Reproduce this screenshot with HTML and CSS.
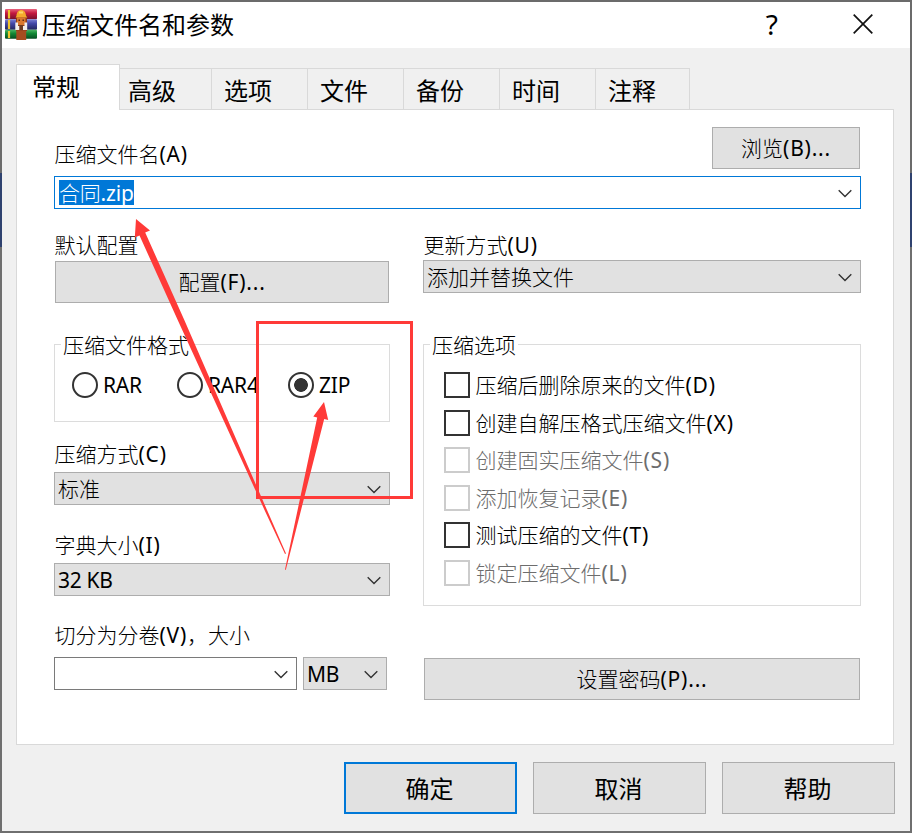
FILE: index.html
```html
<!DOCTYPE html>
<html lang="zh-CN">
<head>
<meta charset="utf-8">
<title>压缩文件名和参数</title>
<link rel="stylesheet" href="styles.css">
</head>
<body>
<svg width="0" height="0" class="defs">
  <symbol id="chev" viewBox="0 0 14 9"><path d="M.7 1.2 7 7.5l6.300-6.300" fill="none" stroke="#333" stroke-width="1.400"/></symbol>
</svg>
<div class="window">
  <header class="titlebar">
    <svg class="logo" viewBox="0 0 32 31">
      <defs>
        <linearGradient id="r" x2="0" y2="1"><stop stop-color="#e8647e"/><stop offset=".4" stop-color="#c4183f"/><stop offset="1" stop-color="#74102c"/></linearGradient>
        <linearGradient id="b" x2="0" y2="1"><stop stop-color="#7b7fd4"/><stop offset=".4" stop-color="#4348a8"/><stop offset="1" stop-color="#23265f"/></linearGradient>
        <linearGradient id="g" x2="0" y2="1"><stop stop-color="#4fb565"/><stop offset=".4" stop-color="#138a36"/><stop offset="1" stop-color="#064c22"/></linearGradient>
      </defs>
      <rect y="0" width="32" height="10.300" rx="1" fill="url(#r)"/>
      <rect y="10.300" width="32" height="10.400" rx="1" fill="url(#b)"/>
      <rect y="20.700" width="32" height="9" rx="1" fill="url(#g)"/>
      <path d="M4 1v8.500M4 11v9M4 22v7" stroke="#efc52e" stroke-width="2.200"/>
      <path d="M11 6h11v16H11z" fill="#8c3a1c"/>
      <path d="M11.500 7c0-8 9.500-8 9.500 0l1.500 1.500h-12z" fill="#f5a92d"/>
      <path d="M14 2.500h4v2h-4z" fill="#fbd86a"/>
      <path d="M12 8.500h8.500V16H12z" fill="#d9782f"/>
      <path d="M13.500 10.500h1.500V12h-1.500zm4 0H19V12h-1.500z" fill="#5c2a14"/>
      <path d="M10.300 13.500h2.700v7.500h-2.700zm9.200 0h2.700v7.500h-2.700zM13 17h1.500v4H13zm5 0h1.500v4H18z" fill="#f2efec"/>
      <path d="M14.500 16h3.500v5h-3.500z" fill="#6b3b22"/>
      <path d="M11.300 21.500h9.900V31h-9.900z" fill="#a64c20"/>
    </svg>
    <h1>压缩文件名和参数</h1>
    <span class="help">?</span>
    <svg class="close" viewBox="0 0 20 20"><path d="M.7.7 19.300 19.300M19.300.7.7 19.300" stroke="#111" stroke-width="1.700"/></svg>
  </header>
  <nav class="tabs">
    <div class="tab active">常规</div><div class="tab">高级</div><div class="tab">选项</div><div class="tab">文件</div><div class="tab">备份</div><div class="tab">时间</div><div class="tab last">注释</div>
  </nav>
  <main class="panel">
    <div class="name-row">
      <label>压缩文件名<span class="lat">(A)</span></label>
      <button class="btn browse">浏览<span class="lat">(B)...</span></button>
    </div>
    <div class="combo focus"><span class="selected">合同<span class="zip">.zip</span></span><svg><use href="#chev"/></svg></div>
    <div class="columns">
      <section class="left">
        <label>默认配置</label>
        <button class="btn profile">配置<span class="lat">(F)...</span></button>
        <fieldset class="group format">
          <legend>压缩文件格式</legend>
          <div class="radio rar"><i></i>RAR</div>
          <div class="radio rar4"><i></i>RAR4</div>
          <div class="radio checked"><i></i>ZIP</div>
        </fieldset>
        <label class="l-method">压缩方式<span class="lat">(C)</span></label>
        <div class="combo">标准<svg><use href="#chev"/></svg></div>
        <label class="l-next">字典大小<span class="lat">(I)</span></label>
        <div class="combo"><span class="lat2">32 KB</span><svg><use href="#chev"/></svg></div>
        <label class="l-next">切分为分卷<span class="lat">(V)</span>，大小</label>
        <div class="volume">
          <div class="combo edit"><svg><use href="#chev"/></svg></div>
          <div class="combo unit"><span class="lat2">MB</span><svg><use href="#chev"/></svg></div>
        </div>
      </section>
      <section class="right">
        <label>更新方式<span class="lat">(U)</span></label>
        <div class="combo">添加并替换文件<svg><use href="#chev"/></svg></div>
        <fieldset class="group options">
          <legend>压缩选项</legend>
          <div class="check"><i></i>压缩后删除原来的文件<span class="lat">(D)</span></div>
          <div class="check"><i></i>创建自解压格式压缩文件<span class="lat">(X)</span></div>
          <div class="check off"><i></i>创建固实压缩文件<span class="lat">(S)</span></div>
          <div class="check off"><i></i>添加恢复记录<span class="lat">(E)</span></div>
          <div class="check"><i></i>测试压缩的文件<span class="lat">(T)</span></div>
          <div class="check off"><i></i>锁定压缩文件<span class="lat">(L)</span></div>
        </fieldset>
        <button class="btn password">设置密码<span class="lat">(P)...</span></button>
      </section>
    </div>
  </main>
  <footer class="actions">
    <button class="btn primary">确定</button>
    <button class="btn">取消</button>
    <button class="btn">帮助</button>
  </footer>
</div>
<svg class="marks" viewBox="0 0 912 833">
  <rect x="257.500" y="322.500" width="154" height="175" fill="none" stroke="#ff3a38" stroke-width="3"/>
  <path d="M136 219 150 230.500 145.200 232.500 184.300 320 267 510 286 553.500 285 554 264.500 510 177.700 320 139.500 235.500 134.800 237.500Z" fill="#ff3a38"/>
  <path d="M324 402 328.200 420 324.200 419 285.800 570 285 569.500 317.200 417.500 313.300 416.500Z" fill="#ff3a38"/>
</svg>
</body>
</html>
```
FILE: styles.css
```css
* { box-sizing: border-box; }
body {
  margin: 0;
  width: 912px;
  height: 833px;
  padding: 2px;
  overflow: hidden;
  position: relative;
  background: linear-gradient(#6b6b6b 0 173px, #2f426f 173px 247px, #6f6f6f 247px);
  font: 300 21px/28px "Noto Sans", "Noto Sans CJK SC", sans-serif;
  color: #000;
}
.defs { position: absolute; }
.window {
  width: 908px;
  height: 829px;
  background: #f0f0f0;
  display: flex;
  flex-direction: column;
}
.titlebar {
  height: 46px;
  flex: none;
  background: #fff;
  display: flex;
  align-items: center;
  padding: 0 37px 2px 3px;
}
.logo { width: 32px; height: 31px; }
h1 {
  margin: 0 0 0 5px;
  flex: 1;
  font: 400 24px/34px "Noto Sans CJK SC", sans-serif;
}
.help { font-size: 28px; font-weight: 400; margin-right: 75px; }
.close { width: 20px; height: 20px; }
.tabs {
  display: flex;
  align-items: flex-end;
  height: 62px;
  flex: none;
  padding-left: 14px;
  font: 400 24px/34px "Noto Sans CJK SC", sans-serif;
}
.tab {
  width: 96px;
  height: 42px;
  border: 1px solid #d9d9d9;
  border-left: 0;
  padding: 4px 0 0 12px;
}
.tab.active {
  width: 104px;
  height: 46px;
  border-left: 1px solid #d9d9d9;
  border-bottom: 0;
  background: #fff;
  padding: 4px 0 0 15px;
}
.tab:nth-child(2) { width: 92px; padding-left: 8px; }
.tab.last { width: 94px; }
.tabs::after { content: ""; height: 1px; background: #d9d9d9; flex: 1; margin-right: 16px; }
.panel {
  margin-left: 14px;
  width: 878px;
  height: 635px;
  flex: none;
  background: #fff;
  border: 1px solid #d9d9d9;
  border-top: 0;
  padding: 17px 32px 0 37px;
}
.name-row { display: flex; justify-content: space-between; height: 49px; padding-right: 1px; }
.name-row label { margin-top: 13px; }
label { display: block; height: 28px; padding-left: .5px; white-space: nowrap; }
.lat { font-weight: 400; letter-spacing: .8px; }
.lat2 { font-weight: 400; letter-spacing: -.3px; }
.btn {
  font: inherit;
  color: inherit;
  padding: 0;
  border: 1px solid #adadad;
  background: #e1e1e1;
  display: block;
}
.browse { width: 148px; height: 42px; }
.combo {
  height: 33px;
  border: 1px solid #adadad;
  background: #e1e1e1;
  display: flex;
  align-items: center;
  justify-content: space-between;
  padding: 0 8.500px 0 3px;
}
.combo svg { width: 14px; height: 9px; margin: 1px 0 0 auto; }
.focus { background: #fff; border-color: #0078d7; padding-left: 4px; }
.selected { background: #0078d7; color: #fff; height: 25px; line-height: 26px; margin-bottom: 1px; letter-spacing: -.2px; }
.zip { font-weight: 400; }
.columns { display: flex; justify-content: space-between; margin-top: 22px; }
.left { width: 336px; }
.right { width: 438px; }
.profile { width: 334px; height: 42px; margin: 2px 1px 0; }
.right > .combo { margin-top: 1px; }
.group {
  border: 1px solid #dcdcdc;
  margin: 0;
  padding: 0;
  min-width: 0;
}
legend { padding: 1px 2px 0; margin-left: 6px; height: 28px; }
.format { height: 92px; margin-top: 27px; display: flex; }
.radio { display: flex; align-items: center; gap: 5px; height: 28px; margin-top: 13px; font-weight: 400; letter-spacing: -.2px; }
.radio i { width: 26px; height: 26px; border: 2px solid #333; border-radius: 50%; }
.rar { margin-left: 17px; width: 105px; }
.rar4 { width: 111px; }
.checked i { background: radial-gradient(circle, #333 0 6.500px, #fff 7.200px); }
.l-method { margin-top: 18px; }
.l-method + .combo { margin-top: 4px; }
.l-next { margin-top: 26px; }
.l-next + .combo { margin-top: 4px; }
.l-next + .volume { margin-top: 8px; }
.l-next ~ .l-next { margin-top: 25px; }
.volume { display: flex; gap: 6px; }
.edit { width: 243px; background: #fff; border-color: #7a7a7a; }
.unit { width: 84px; }
.options { height: 276px; margin-top: 37px; }
.check { display: flex; align-items: center; height: 37.500px; white-space: nowrap; }
.options legend + .check { margin-top: 8px; height: 38px; }
.check i { width: 26px; height: 26px; border: 2px solid #333; margin: 0 5.500px 0 20px; }
.off { color: #6d6d6d; }
.off i { border-color: #ccc; }
.password { width: 436px; height: 42px; margin: 52px 1px 0; }
.actions { display: flex; justify-content: flex-end; gap: 16px; margin: 17px 15px 0 0; }
.actions .btn { width: 173px; height: 52px; font: 400 24px/34px "Noto Sans CJK SC", sans-serif; padding: 0 2px 1px 0; }
.actions .primary { border: 2px solid #0078d7; }
.marks { position: absolute; left: 0; top: 0; width: 912px; height: 833px; pointer-events: none; }
```
